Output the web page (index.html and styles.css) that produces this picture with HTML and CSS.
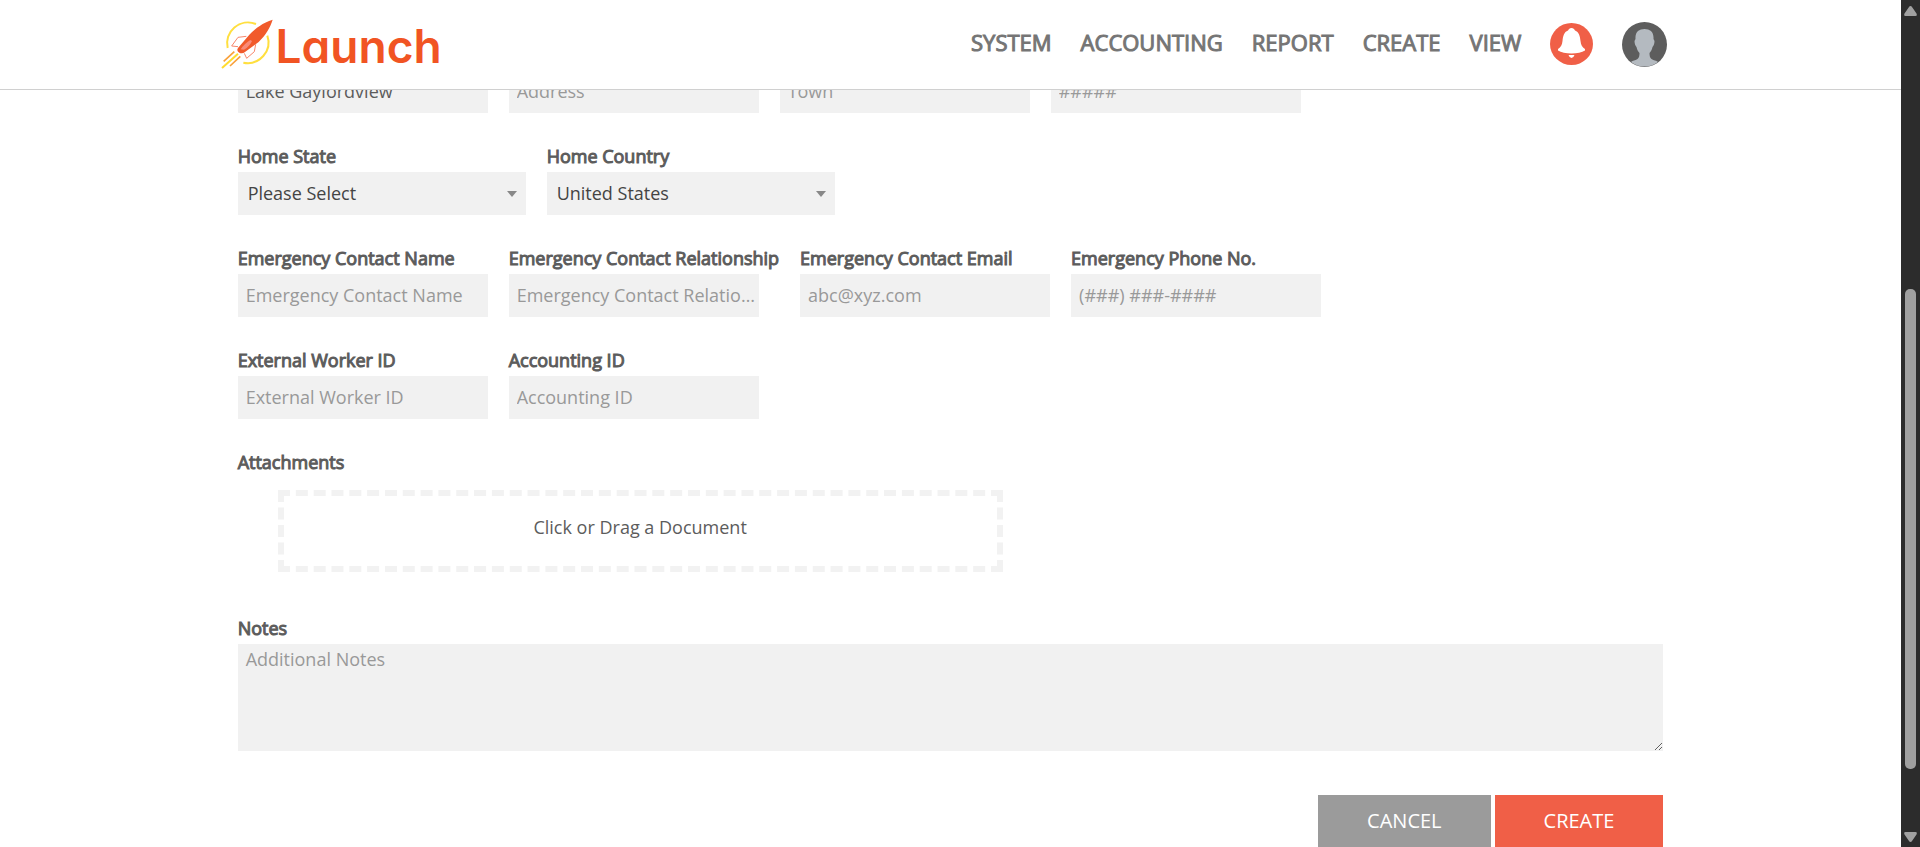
FILE: index.html
```html
<!DOCTYPE html>
<html lang="en">
<head>
<meta charset="utf-8">
<title>Launch</title>
<link rel="stylesheet" href="styles.css">
</head>
<body>
<header class="topbar">
  <div class="topbar-inner">
    <a class="logo" href="#">
      <svg class="logo-mark" viewBox="30 50 165 156" aria-hidden="true">
        <g fill="none" stroke="#ffdf3f" stroke-width="6">
          <path d="M53 140A63 62 0 0 1 138 68"/>
          <path d="M172 103A63 62 0 0 1 100 184"/>
        </g>
        <g fill="none" stroke="#f7866b" stroke-width="3">
          <path d="M109 105L84 108L65 134L84 136"/>
          <path d="M137 129L133 151L110 171L103 156"/>
        </g>
        <path d="M188 55C158 64 138 80 118 100L84 140C80 145 82 151 88 154C94 157 100 156 106 151L146 122C168 100 180 80 188 55Z" fill="#f15a2b"/>
        <path d="M121 116C111 122 99 133 92 144L102 145C113 139 122 129 126 119Z" fill="#f88b79"/>
        <path d="M73 151L41 180M91 165L60 194" stroke="#f9a13a" stroke-width="5"/>
        <path d="M84 157L36 200" stroke="#ffdc2e" stroke-width="6"/>
      </svg>
      <span class="logo-text">Launch</span>
    </a>
    <nav class="menu">
      <a href="#">SYSTEM</a>
      <a href="#">ACCOUNTING</a>
      <a href="#">REPORT</a>
      <a href="#">CREATE</a>
      <a href="#">VIEW</a>
      <button class="round bell" type="button" aria-label="Notifications">
        <svg viewBox="0 0 43 42" aria-hidden="true">
          <ellipse cx="21.5" cy="21" rx="21.5" ry="21" fill="#f05f47"/>
          <path d="M19 6Q21.500 4 24 6L25 7.500C29 9 30 13 30.500 18C31 22 32 24 35 26V27.500C32 29.500 27 30.500 21.500 30.500C16 30.500 11 29.500 8 27.500V26C11 24 12 22 12.500 18C13 13 14 9 18 7.500Z" fill="#fff"/>
          <path d="M18.500 32H24.500Q23.500 35 21.500 35Q19.500 35 18.500 32Z" fill="#fff"/>
        </svg>
      </button>
      <button class="round avatar" type="button" aria-label="Account">
        <svg viewBox="0 0 45 45" aria-hidden="true">
          <circle cx="22.500" cy="22.500" r="22.500" fill="#5d5d5d"/>
          <path d="M13.500 17C13 10 17 7 22.500 7C28 7 32 10 31.500 17L32.500 19C32.500 22 31.500 24 30.500 25C30 28 28.500 30 27.500 31C27.500 34 28 36 29.500 37C32 38.500 34 38.500 36 40A22.500 22.500 0 0 1 9 40C11 38.500 13 38.500 15.500 37C17 36 17.500 34 17.500 31C16.500 30 15 28 14.500 25C13.500 24 12.500 22 12.500 19Z" fill="#b4bac0"/>
        </svg>
      </button>
    </nav>
  </div>
</header>

<main class="page">
  <form class="form">
    <div class="row">
      <div class="field"><input type="text" value="Lake Gaylordview" aria-label="City"></div>
      <div class="field"><input type="text" placeholder="Address" aria-label="Address"></div>
      <div class="field"><input type="text" placeholder="Town" aria-label="Town"></div>
      <div class="field"><input type="text" placeholder="#####" aria-label="Zip code"></div>
    </div>
    <div class="row">
      <div class="field">
        <label for="state">Home State</label>
        <select id="state"><option>Please Select</option></select>
      </div>
      <div class="field">
        <label for="country">Home Country</label>
        <select id="country"><option>United States</option></select>
      </div>
    </div>
    <div class="row">
      <div class="field">
        <label for="ec-name">Emergency Contact Name</label>
        <input id="ec-name" type="text" placeholder="Emergency Contact Name">
      </div>
      <div class="field">
        <label for="ec-rel">Emergency Contact Relationship</label>
        <input id="ec-rel" type="text" placeholder="Emergency Contact Relationship">
      </div>
      <div class="field">
        <label for="ec-email">Emergency Contact Email</label>
        <input id="ec-email" type="email" placeholder="abc@xyz.com">
      </div>
      <div class="field">
        <label for="ec-phone">Emergency Phone No.</label>
        <input id="ec-phone" type="tel" placeholder="(###) ###-####">
      </div>
    </div>
    <div class="row">
      <div class="field">
        <label for="worker-id">External Worker ID</label>
        <input id="worker-id" type="text" placeholder="External Worker ID">
      </div>
      <div class="field">
        <label for="acc-id">Accounting ID</label>
        <input id="acc-id" type="text" placeholder="Accounting ID">
      </div>
    </div>
    <div class="attachments">
      <span class="caption" id="attachments">Attachments</span>
      <button class="dropzone" type="button" aria-describedby="attachments">Click or Drag a Document</button>
    </div>
    <div class="notes">
      <label for="notes">Notes</label>
      <textarea id="notes" placeholder="Additional Notes"></textarea>
    </div>
    <div class="actions">
      <button class="btn btn-cancel" type="button">CANCEL</button>
      <button class="btn btn-create" type="submit">CREATE</button>
    </div>
  </form>
</main>

<div class="scrollbar" aria-hidden="true">
  <svg class="arrow" viewBox="0 0 13 10"><path d="M6.500 0Q7.500 0 8 1L12.500 7.500Q13.500 10 11.500 10H1.500Q-.5 10 .5 7.500L5 1Q5.500 0 6.500 0Z"/></svg>
  <div class="track"><div class="thumb"></div></div>
  <svg class="arrow" viewBox="0 0 13 10"><path d="M6.500 10Q7.500 10 8 9L12.500 2.500Q13.500 0 11.500 0H1.500Q-.5 0 .5 2.500L5 9Q5.500 10 6.500 10Z"/></svg>
</div>
</body>
</html>
```
FILE: styles.css
```css
* {
  box-sizing: border-box;
}

html {
  overflow: hidden;
}

body {
  margin: 0;
  padding-right: 19px;
  background: #fff;
  color: #5c5c5c;
  font: 18px/27px "Open Sans", "Noto Sans", sans-serif;
}

button,
input,
select,
textarea {
  margin: 0;
  border: 0;
  border-radius: 0;
  font: inherit;
  color: inherit;
}

/* Top bar */
.topbar {
  position: fixed;
  z-index: 1;
  top: 0;
  left: 0;
  right: 19px;
  height: 90px;
  background: #fff;
  border-bottom: 1px solid #d0d0d0;
}

.topbar-inner {
  display: flex;
  align-items: center;
  justify-content: space-between;
  width: 77%;
  height: 88px;
  margin: 0 auto;
  padding: 0 15px 0 1px;
}

.logo {
  display: flex;
  align-items: center;
  color: #f15423;
  text-decoration: none;
}

.logo-mark {
  width: 55px;
  height: 52px;
}

.logo-text {
  padding: 3px 0 0 1px;
  font: 600 46px/52px Inter, sans-serif;
  font-feature-settings: "cv11";
}

.menu {
  display: flex;
  align-items: center;
  gap: 29px;
}

.menu a {
  padding-bottom: 3px;
  color: #757575;
  font-size: 22px;
  text-decoration: none;
  -webkit-text-stroke: 1px #757575;
}

.round {
  padding: 0;
  background: none;
}

.round svg {
  display: block;
  width: 100%;
}

.bell {
  width: 43px;
}

.avatar {
  width: 45px;
}

/* Form */
.page {
  width: 75%;
  margin: 0 auto;
  padding-top: 70px;
}

.form {
  display: flex;
  flex-direction: column;
  gap: 32px;
}

.row {
  display: flex;
  gap: 21px;
}

label,
.caption {
  display: block;
  padding-bottom: 4px;
  line-height: 23px;
  -webkit-text-stroke: 1px #5c5c5c;
}

.field input,
.field select {
  display: block;
  width: 250px;
  height: 43px;
  padding: 0 0 2px 8px;
  background: #f1f1f1;
  text-overflow: ellipsis;
}

.field select {
  width: 288px;
  padding: 0 10px 1px;
  color: #444;
  appearance: none;
  background: #f1f1f1 url("data:image/svg+xml,%3Csvg xmlns='http://www.w3.org/2000/svg' width='10' height='6'%3E%3Cpath d='M0 0h10L5 6z' fill='%23888'/%3E%3C/svg%3E") no-repeat right 9px center;
}

::placeholder {
  color: #999;
  opacity: 1;
}

.dropzone {
  display: block;
  width: 725px;
  margin: 12px 0 13px 40px;
  padding: 18px 0 25px;
  border: 6px dashed #f2f2f2;
  background: none;
}

.notes textarea {
  display: block;
  width: 100%;
  height: 107px;
  padding: 2px 8px;
  background: #f1f1f1;
}

.actions {
  display: flex;
  justify-content: flex-end;
  gap: 4px;
  margin-top: 12px;
}

.btn {
  height: 52px;
  padding: 0 49px 2px;
  color: #fff;
  font-size: 20px;
}

.btn-cancel {
  background: #9b9b9b;
}

.btn-create {
  background: #f05f47;
}

/* Scrollbar */
.scrollbar {
  position: fixed;
  top: 0;
  right: 0;
  bottom: 0;
  display: flex;
  flex-direction: column;
  align-items: center;
  width: 19px;
  padding: 6px 0 5px;
  background: #2c2c2c;
}

.arrow {
  width: 13px;
  height: 10px;
  fill: #a0a0a0;
}

.track {
  display: grid;
  flex: 1;
  grid-template-rows: 273fr 480fr 63fr;
}

.thumb {
  grid-row: 2;
  width: 11px;
  border-radius: 5px;
  background: #a0a0a0;
}
```
